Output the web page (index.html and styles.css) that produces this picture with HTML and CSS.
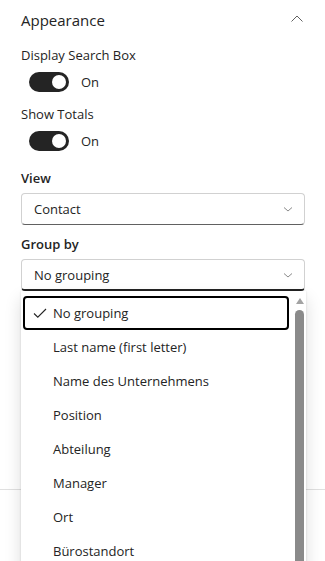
FILE: index.html
```html
<!DOCTYPE html>
<html lang="en">
<head>
    <meta charset="UTF-8">
    <meta name="viewport" content="width=device-width, initial-scale=1.0">
    <title>Appearance settings</title>
    <link rel="stylesheet" href="styles.css">
</head>
<body>
    <div class="panel">
        <div class="section-head">
            <span class="section-title">Appearance</span>
            <svg class="chevron-up" width="14" height="14" viewBox="0 0 14 14">
                <path d="M1.5 9.5 L7 4 L12.5 9.5" fill="none" stroke="#616161" stroke-width="1"/>
            </svg>
        </div>

        <div class="label">Display Search Box</div>
        <div class="toggle-row">
            <span class="toggle"><span class="knob"></span></span>
            <span class="toggle-text">On</span>
        </div>

        <div class="label spaced">Show Totals</div>
        <div class="toggle-row">
            <span class="toggle"><span class="knob"></span></span>
            <span class="toggle-text">On</span>
        </div>

        <div class="label strong first-field">View</div>
        <div class="dropdown">
            <span>Contact</span>
            <svg class="chevron-down" width="12" height="12" viewBox="0 0 12 12">
                <path d="M2 4.5 L6 8 L10 4.5" fill="none" stroke="#8a8a8a" stroke-width="1"/>
            </svg>
        </div>

        <div class="label strong">Group by</div>
        <div class="dropdown-wrap">
            <div class="dropdown open">
                <span>No grouping</span>
                <svg class="chevron-down" width="12" height="12" viewBox="0 0 12 12">
                    <path d="M2 4.5 L6 8 L10 4.5" fill="none" stroke="#8a8a8a" stroke-width="1"/>
                </svg>
            </div>
            <div class="listbox">
                <div class="options">
                    <div class="option selected">
                        <svg class="check" width="14" height="14" viewBox="0 0 14 14">
                            <path d="M1 7.5 L4.8 11.2 L13 3" fill="none" stroke="#242424" stroke-width="1.1"/>
                        </svg>
                        <span>No grouping</span>
                    </div>
                    <div class="option"><span>Last name (first letter)</span></div>
                    <div class="option"><span>Name des Unternehmens</span></div>
                    <div class="option"><span>Position</span></div>
                    <div class="option"><span>Abteilung</span></div>
                    <div class="option"><span>Manager</span></div>
                    <div class="option"><span>Ort</span></div>
                    <div class="option"><span>Bürostandort</span></div>
                </div>
                <div class="scrollbar">
                    <span class="arrow"></span>
                    <span class="thumb"></span>
                </div>
            </div>
        </div>

        <div class="divider"></div>
    </div>
</body>
</html>
```

FILE: styles.css
```css
body {
    margin: 0;
    background: #fff;
    color: #242424;
    font-family: 'Open Sans', 'Noto Sans', sans-serif;
    font-size: 13px;
}
.panel {
    height: 561px;
    overflow: hidden;
    padding: 0 20px 0 21px;
}
.section-head {
    height: 40px;
    display: flex;
    align-items: center;
    justify-content: space-between;
}
.section-title {
    font-size: 15px;
}
.chevron-up {
    margin-right: 1px;
    margin-top: -2px;
}
.label {
    line-height: 20px;
    margin-top: 5px;
}
.label.spaced {
    margin-top: 12px;
}
.label.strong {
    font-weight: 600;
    margin-top: 9px;
}
.label.first-field {
    margin-top: 17px;
}
.toggle-row {
    display: flex;
    align-items: center;
    gap: 12px;
    height: 20px;
    margin-top: 7px;
    padding-left: 8px;
}
.toggle {
    width: 40px;
    height: 20px;
    border-radius: 10px;
    background: #242424;
    display: flex;
    align-items: center;
    justify-content: flex-end;
    padding-right: 3px;
    box-sizing: border-box;
}
.knob {
    width: 14px;
    height: 14px;
    border-radius: 50%;
    background: #fff;
}
.dropdown {
    margin-top: 5px;
    height: 32px;
    box-sizing: border-box;
    border: 1px solid #d1d1d1;
    border-bottom-color: #616161;
    border-radius: 4px;
    display: flex;
    align-items: center;
    justify-content: space-between;
    padding: 0 10px 0 12px;
}
.dropdown.open {
    border-bottom: 2px solid #242424;
}
.dropdown-wrap {
    position: relative;
    z-index: 2;
}
.listbox {
    position: absolute;
    left: 0;
    top: 32px;
    width: 285px;
    height: 290px;
    background: #fff;
    box-shadow: 0 0 2px rgba(0, 0, 0, 0.12), 0 8px 16px rgba(0, 0, 0, 0.14);
    display: flex;
    box-sizing: border-box;
    padding: 5px 2px 0 2px;
}
.options {
    flex: 1;
}
.option {
    height: 34px;
    display: flex;
    align-items: center;
    padding-left: 28px;
    box-sizing: border-box;
    border: 2px solid transparent;
    border-radius: 4px;
}
.option.selected {
    border-color: #000;
    padding-left: 8px;
}
.check {
    margin-right: 6px;
}
.scrollbar {
    width: 9px;
    margin: 2px 0 0 6px;
    display: flex;
    flex-direction: column;
    align-items: center;
}
.arrow {
    width: 0;
    height: 0;
    border-left: 4px solid transparent;
    border-right: 4px solid transparent;
    border-bottom: 6px solid #a3a3a3;
}
.thumb {
    margin-top: 6px;
    width: 9px;
    flex: 1;
    background: #8a8a8a;
    border-radius: 5px 5px 0 0;
}
.divider {
    margin: 198px -20px 0 -21px;
    border-top: 1px solid #e0e0e0;
}
```
